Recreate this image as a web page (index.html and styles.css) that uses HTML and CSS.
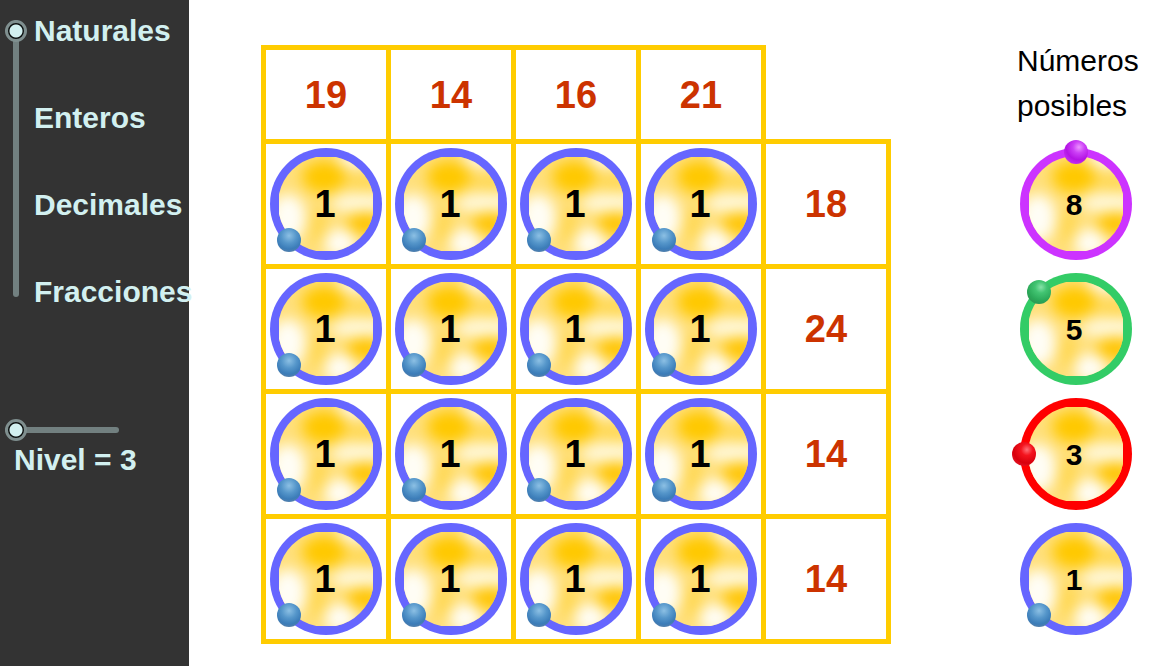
FILE: index.html
```html
<!DOCTYPE html>
<html lang="es">
<head>
<meta charset="utf-8">
<meta name="viewport" content="width=device-width, initial-scale=1">
<title>Números posibles</title>
<link rel="stylesheet" href="styles.css">
</head>
<body>
<svg class="defs" aria-hidden="true">
  <defs>
    <filter id="soft" x="-60%" y="-60%" width="220%" height="220%" color-interpolation-filters="sRGB"><feGaussianBlur stdDeviation="7"/></filter>
    <clipPath id="square"><rect x="13" y="13" width="94" height="94"/></clipPath>
    <clipPath id="face" clip-path="url(#square)"><circle cx="60" cy="60" r="48"/></clipPath>
    <radialGradient id="ball-blue" cx=".5" cy=".32" r=".7"><stop offset="0" stop-color="#8cc0e4"/><stop offset=".45" stop-color="#5596ca"/><stop offset=".8" stop-color="#3b7cb8"/><stop offset="1" stop-color="#5580aa"/></radialGradient>
    <radialGradient id="ball-purple" cx=".62" cy=".3" r=".7"><stop offset="0" stop-color="#ec94ff"/><stop offset=".35" stop-color="#cc40f6"/><stop offset=".75" stop-color="#b414e4"/><stop offset="1" stop-color="#c02af0"/></radialGradient>
    <radialGradient id="ball-green" cx=".58" cy=".3" r=".7"><stop offset="0" stop-color="#86e2a8"/><stop offset=".35" stop-color="#42c472"/><stop offset=".8" stop-color="#2ba858"/><stop offset="1" stop-color="#2c9a54"/></radialGradient>
    <radialGradient id="ball-red" cx=".62" cy=".32" r=".7"><stop offset="0" stop-color="#ff7078"/><stop offset=".35" stop-color="#f4141e"/><stop offset=".8" stop-color="#d8000c"/><stop offset="1" stop-color="#e01020"/></radialGradient>
    <symbol id="plate" viewBox="0 0 120 120">
      <circle cx="60" cy="60" r="56" fill="currentColor"/>
      <g clip-path="url(#face)">
        <rect width="120" height="120" fill="#ffe07c"/>
        <g filter="url(#soft)">
          <ellipse cx="58" cy="33" rx="22" ry="16" fill="#ffc800"/>
          <ellipse cx="98" cy="39" rx="18" ry="8" fill="#ffd750"/>
          <ellipse cx="90" cy="14" rx="18" ry="9" fill="#fffaf0"/>
          <ellipse cx="22" cy="74" rx="18" ry="24" fill="#fffdf6"/>
          <ellipse cx="94" cy="59" rx="30" ry="10" fill="#fff8dc"/>
          <ellipse cx="99" cy="79" rx="18" ry="11" fill="#ffc400"/>
          <ellipse cx="74" cy="99" rx="16" ry="14" fill="#fffdf6"/>
          <ellipse cx="52" cy="82" rx="9" ry="18" fill="#ffd752"/>
        </g>
      </g>
    </symbol>
    <symbol id="disc-1" viewBox="0 0 120 120" overflow="visible"><use href="#plate" width="120" height="120"/><circle cx="23" cy="96" r="12" fill="url(#ball-blue)"/></symbol>
    <symbol id="disc-3" viewBox="0 0 120 120" overflow="visible"><use href="#plate" width="120" height="120"/><circle cx="8" cy="60" r="12" fill="url(#ball-red)"/></symbol>
    <symbol id="disc-5" viewBox="0 0 120 120" overflow="visible"><use href="#plate" width="120" height="120"/><circle cx="23" cy="23" r="12" fill="url(#ball-green)"/></symbol>
    <symbol id="disc-8" viewBox="0 0 120 120" overflow="visible"><use href="#plate" width="120" height="120"/><circle cx="60" cy="8" r="12" fill="url(#ball-purple)"/></symbol>
  </defs>
</svg>
<div class="app">
  <aside class="sidebar">
    <div class="kinds">
      <input class="slider slider-vertical" id="kind" type="range" min="0" max="3" value="0" aria-label="Tipo de número">
      <ul class="kind-list">
        <li>Naturales</li>
        <li>Enteros</li>
        <li>Decimales</li>
        <li>Fracciones</li>
      </ul>
    </div>
    <div class="level">
      <input class="slider slider-level" id="level" type="range" min="3" max="6" value="3">
      <label class="level-label" for="level">Nivel = 3</label>
    </div>
  </aside>
  <main class="board">
    <table class="grid">
      <thead>
        <tr><th>19</th><th>14</th><th>16</th><th>21</th><td class="blank"></td></tr>
      </thead>
      <tbody>
        <tr>
          <td><button class="disc blue"><svg viewBox="0 0 120 120"><use href="#disc-1"/></svg><span>1</span></button></td>
          <td><button class="disc blue"><svg viewBox="0 0 120 120"><use href="#disc-1"/></svg><span>1</span></button></td>
          <td><button class="disc blue"><svg viewBox="0 0 120 120"><use href="#disc-1"/></svg><span>1</span></button></td>
          <td><button class="disc blue"><svg viewBox="0 0 120 120"><use href="#disc-1"/></svg><span>1</span></button></td>
          <th>18</th>
        </tr>
        <tr>
          <td><button class="disc blue"><svg viewBox="0 0 120 120"><use href="#disc-1"/></svg><span>1</span></button></td>
          <td><button class="disc blue"><svg viewBox="0 0 120 120"><use href="#disc-1"/></svg><span>1</span></button></td>
          <td><button class="disc blue"><svg viewBox="0 0 120 120"><use href="#disc-1"/></svg><span>1</span></button></td>
          <td><button class="disc blue"><svg viewBox="0 0 120 120"><use href="#disc-1"/></svg><span>1</span></button></td>
          <th>24</th>
        </tr>
        <tr>
          <td><button class="disc blue"><svg viewBox="0 0 120 120"><use href="#disc-1"/></svg><span>1</span></button></td>
          <td><button class="disc blue"><svg viewBox="0 0 120 120"><use href="#disc-1"/></svg><span>1</span></button></td>
          <td><button class="disc blue"><svg viewBox="0 0 120 120"><use href="#disc-1"/></svg><span>1</span></button></td>
          <td><button class="disc blue"><svg viewBox="0 0 120 120"><use href="#disc-1"/></svg><span>1</span></button></td>
          <th>14</th>
        </tr>
        <tr>
          <td><button class="disc blue"><svg viewBox="0 0 120 120"><use href="#disc-1"/></svg><span>1</span></button></td>
          <td><button class="disc blue"><svg viewBox="0 0 120 120"><use href="#disc-1"/></svg><span>1</span></button></td>
          <td><button class="disc blue"><svg viewBox="0 0 120 120"><use href="#disc-1"/></svg><span>1</span></button></td>
          <td><button class="disc blue"><svg viewBox="0 0 120 120"><use href="#disc-1"/></svg><span>1</span></button></td>
          <th>14</th>
        </tr>
      </tbody>
    </table>
  </main>
  <section class="legend">
    <h2 class="legend-title">Números posibles</h2>
    <div class="legend-list">
      <div class="disc small purple"><svg viewBox="0 0 120 120"><use href="#disc-8"/></svg><span>8</span></div>
      <div class="disc small green"><svg viewBox="0 0 120 120"><use href="#disc-5"/></svg><span>5</span></div>
      <div class="disc small red"><svg viewBox="0 0 120 120"><use href="#disc-3"/></svg><span>3</span></div>
      <div class="disc small blue"><svg viewBox="0 0 120 120"><use href="#disc-1"/></svg><span>1</span></div>
    </div>
  </section>
</div>
</body>
</html>
```
FILE: styles.css
```css
* { box-sizing: border-box; }

body {
  margin: 0;
  background: #fff;
  color: #000;
  font-family: "Liberation Sans", Arial, sans-serif;
}

.defs { position: absolute; width: 0; height: 0; }

.app {
  display: grid;
  grid-template-columns: 189px minmax(0, 1fr) 162px;
  min-height: 100vh;
}

/* Sidebar */
.sidebar {
  padding: 13px 0 0 4px;
  background: #333;
  color: #d2f0f0;
  font-size: 30px;
  line-height: 36px;
  font-weight: bold;
}

.kinds { display: flex; gap: 6px; }

.kind-list {
  display: flex;
  flex-direction: column;
  gap: 51px;
  margin: 0;
  padding: 0;
  list-style: none;
}

.slider {
  appearance: none;
  margin: 0;
  background: transparent;
}

.slider::-webkit-slider-runnable-track {
  border-radius: 3px;
  background: #728080;
}

.slider::-webkit-slider-thumb {
  appearance: none;
  width: 22px;
  height: 22px;
  border: 3px solid #7f8f8f;
  border-radius: 50%;
  background: radial-gradient(circle, #d2f0f0 0 6px, #0c1010 7px 8px);
}

.slider-vertical {
  writing-mode: vertical-lr;
  width: 24px;
  height: 277px;
  margin-top: 7px;
}

.slider-vertical::-webkit-slider-runnable-track { width: 6px; }
.slider-vertical::-webkit-slider-thumb { margin-left: -8px; }

.level { padding-top: 108px; }

.slider-level {
  display: block;
  width: 114px;
  height: 24px;
  margin-left: 1px;
}

.slider-level::-webkit-slider-runnable-track { height: 6px; }
.slider-level::-webkit-slider-thumb { margin-top: -8px; }

.level-label { display: block; padding-left: 10px; }

/* Board */
.board { padding: 45px 121px 20px 72px; }

.grid {
  width: 100%;
  border-collapse: collapse;
  table-layout: fixed;
}

.grid th,
.grid td {
  padding: 0;
  border: 5px solid #fc0;
}

.grid .blank { border-top-style: hidden; border-right-style: hidden; }

.grid th {
  height: 94px;
  color: #c30;
  font-size: 38px;
  line-height: 44px;
}

/* Discs */
.disc {
  display: grid;
  align-items: center;
  width: 100%;
  padding: 0;
  border: 0;
  background: none;
  color: #000;
  font-family: inherit;
  font-size: 38px;
  font-weight: bold;
  line-height: 44px;
  text-align: center;
}

.disc > * { grid-area: 1 / 1; }
.disc svg { display: block; width: 100%; overflow: visible; }
.disc span { z-index: 1; padding-right: 2px; }

.blue svg { color: #66f; }
.red svg { color: #f00; }
.green svg { color: #3c6; }
.purple svg { color: #c3f; }

/* Legend */
.legend { padding: 38px 0 0 4px; }

.legend-title {
  width: 130px;
  margin: 0;
  padding-left: 1px;
  font-size: 30px;
  font-weight: normal;
  line-height: 45px;
}

.legend-list {
  display: grid;
  gap: 5px;
  width: 120px;
  padding-top: 16px;
}

.small { line-height: 34px; font-size: 30px; }
.small span { padding: 2px 4px 0 0; }
```
